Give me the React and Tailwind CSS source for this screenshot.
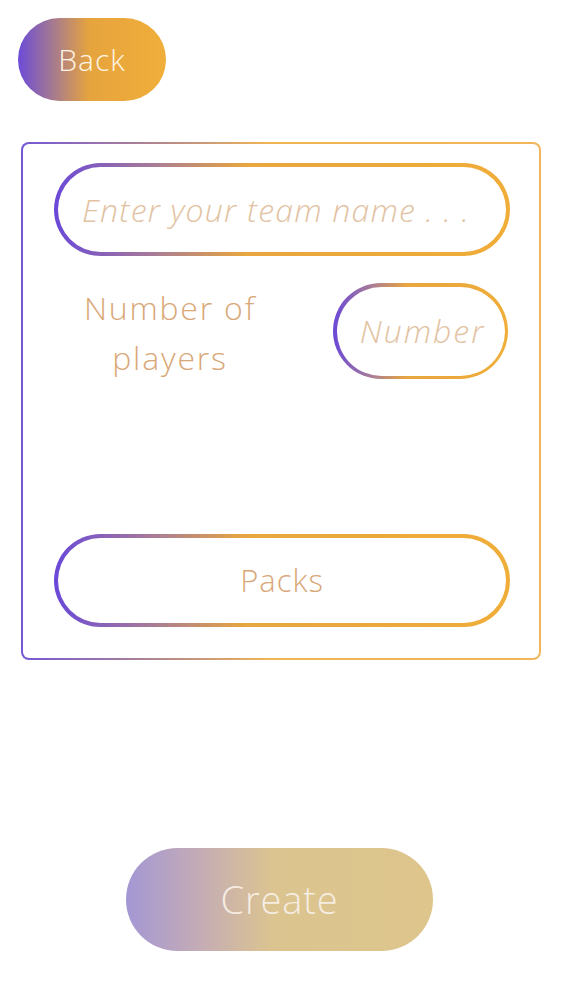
import React from 'react';

const font = { fontFamily: '"Open Sans", "Noto Sans", sans-serif' };

const GradientPill = ({ className = '', inner = 'justify-center', children }) => (
  <div className={`rounded-full bg-[linear-gradient(to_right,#6a48d8_0%,#a97c96_22%,#e7a63f_42%,#f0ad38_100%)] p-[4px] ${className}`}>
    <div className={`flex h-full w-full items-center rounded-full bg-white ${inner}`}>{children}</div>
  </div>
);

export default function App() {
  return (
    <div className="min-h-[1000px] w-full bg-white" style={font}>
      <div className="px-[18px] pt-[18px]">
        <button className="flex h-[83px] w-[148px] items-center justify-center rounded-full bg-[linear-gradient(to_right,#6c4bd8_0%,#a17795_22%,#e6a43e_48%,#f0ae3a_100%)] text-[30px] font-light tracking-[1px] text-[#fff5e4]">
          Back
        </button>
      </div>

      <div className="ml-[21px] mt-[41px] w-[520px] rounded-[8px] bg-[linear-gradient(to_right,#7457d6_0%,#b68a8a_28%,#f0b554_48%,#f2b65a_100%)] p-[2px]">
        <div className="flex h-[514px] flex-col rounded-[6px] bg-white px-[31px] pb-[31px] pt-[19px]">
          <GradientPill className="h-[93px] w-[456px]" inner="justify-start pl-[24px]">
            <span className="text-[32px] font-light italic tracking-[1.2px] text-[#e2c2a2]">Enter your team name . . .</span>
          </GradientPill>

          <div className="mt-[27px] flex items-start">
            <div className="w-[232px] text-center text-[32px] font-light leading-[50px] tracking-[1.8px] text-[#d9a878]">
              Number of
              <br />
              players
            </div>
            <GradientPill className="ml-[47px] h-[96px] w-[175px] !p-[3.5px]">
              <span className="pl-[4px] text-[32px] font-light italic tracking-[2px] text-[#e2c2a2]">Number</span>
            </GradientPill>
          </div>

          <div className="flex-1" />

          <GradientPill className="h-[93px] w-[456px]">
            <span className="text-[31px] font-light tracking-[1px] text-[#d9a878]">Packs</span>
          </GradientPill>
        </div>
      </div>

      <div className="mt-[188px] flex justify-center pr-[4px]">
        <button className="flex h-[103px] w-[307px] items-center justify-center rounded-full bg-[linear-gradient(to_right,#a497d4_0%,#c5adb4_25%,#dcc490_48%,#ddc58c_100%)] text-[38px] font-light tracking-[0.8px] text-[#f5ede2]">
          Create
        </button>
      </div>
    </div>
  );
}
